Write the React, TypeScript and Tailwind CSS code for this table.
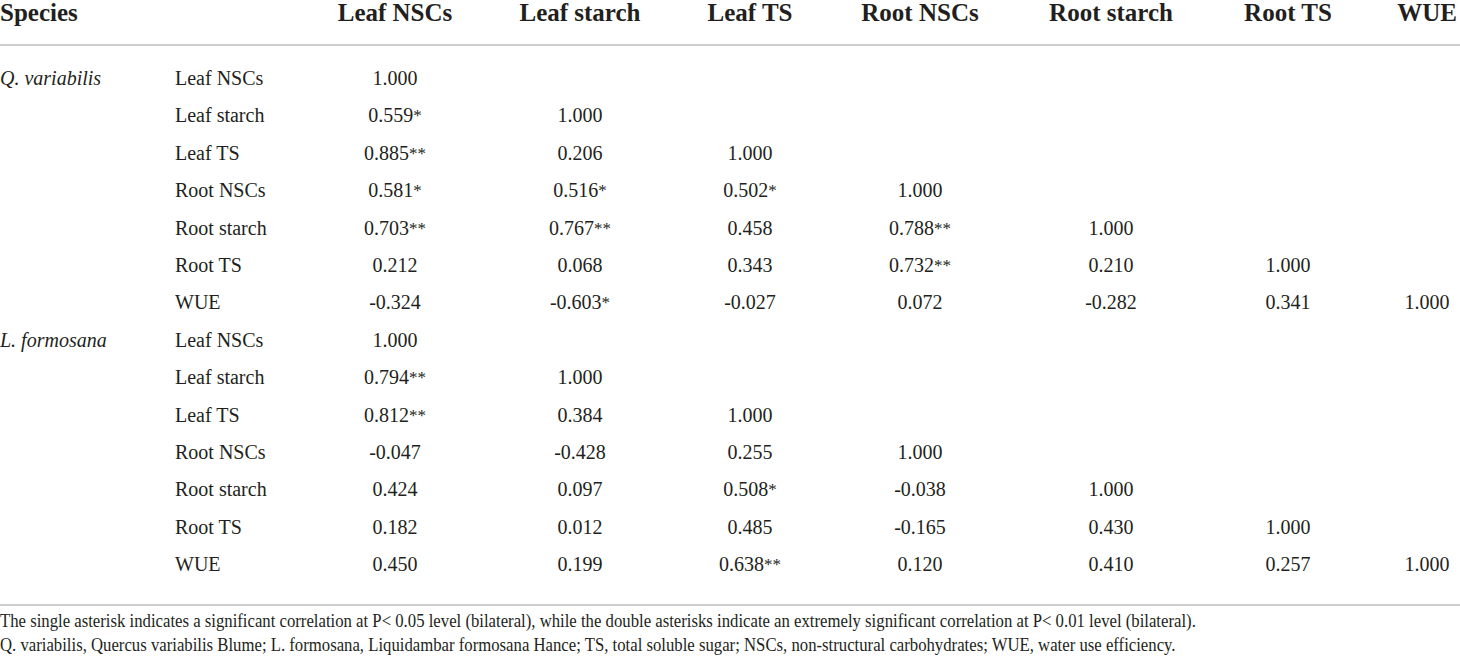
const COLS = 'grid grid-cols-[175px_155px_130px_240px_100px_240px_142px_212px_66px]';

const HEAD = ['Leaf NSCs', 'Leaf starch', 'Leaf TS', 'Root NSCs', 'Root starch', 'Root TS', 'WUE'];

type Block = { species: string; rows: [string, string[]][] };

const DATA: Block[] = [
  {
    species: 'Q. variabilis',
    rows: [
      ['Leaf NSCs', ['1.000']],
      ['Leaf starch', ['0.559*', '1.000']],
      ['Leaf TS', ['0.885**', '0.206', '1.000']],
      ['Root NSCs', ['0.581*', '0.516*', '0.502*', '1.000']],
      ['Root starch', ['0.703**', '0.767**', '0.458', '0.788**', '1.000']],
      ['Root TS', ['0.212', '0.068', '0.343', '0.732**', '0.210', '1.000']],
      ['WUE', ['-0.324', '-0.603*', '-0.027', '0.072', '-0.282', '0.341', '1.000']],
    ],
  },
  {
    species: 'L. formosana',
    rows: [
      ['Leaf NSCs', ['1.000']],
      ['Leaf starch', ['0.794**', '1.000']],
      ['Leaf TS', ['0.812**', '0.384', '1.000']],
      ['Root NSCs', ['-0.047', '-0.428', '0.255', '1.000']],
      ['Root starch', ['0.424', '0.097', '0.508*', '-0.038', '1.000']],
      ['Root TS', ['0.182', '0.012', '0.485', '-0.165', '0.430', '1.000']],
      ['WUE', ['0.450', '0.199', '0.638**', '0.120', '0.410', '0.257', '1.000']],
    ],
  },
];

function Value({ v }: { v: string }) {
  const stars = v.match(/\*+$/)?.[0] ?? '';
  const num = v.slice(0, v.length - stars.length);
  return (
    <span>
      {num}
      {stars && <span className="text-[17px] relative -top-[1px]">{stars}</span>}
    </span>
  );
}

export default function App() {
  return (
    <div className="w-[1460px] h-[665px] bg-white text-[#231f20] font-[Liberation_Serif,Times_New_Roman,serif] overflow-hidden">
      {/* header */}
      <div className={`${COLS} h-[46px] border-b-2 border-[#cfcfcf] text-[25px] font-bold leading-[26px]`}>
        <div className="col-span-2">Species</div>
        {HEAD.map((h) => (
          <div key={h} className="text-center whitespace-nowrap">
            {h}
          </div>
        ))}
      </div>

      {/* body */}
      <div className="pt-[14px] pb-[21px] border-b-2 border-[#cfcfcf] text-[20px]">
        {DATA.map((b) =>
          b.rows.map(([label, vals], i) => (
            <div key={b.species + label} className={`${COLS} h-[37.4px] leading-[37.4px]`}>
              <div className="italic">{i === 0 ? b.species : ''}</div>
              <div>{label}</div>
              {vals.map((v, j) => (
                <div key={j} className="text-center whitespace-nowrap">
                  <Value v={v} />
                </div>
              ))}
            </div>
          ))
        )}
      </div>

      {/* footnote */}
      <div className="pt-[3px] text-[19px] leading-[24px] whitespace-nowrap">
        <p className="origin-left scale-x-[0.88]">
          The single asterisk indicates a significant correlation at P&lt; 0.05 level (bilateral), while the double asterisks indicate an extremely significant correlation at P&lt; 0.01 level (bilateral).
        </p>
        <p className="origin-left scale-x-[0.88]">
          Q. variabilis, Quercus variabilis Blume; L. formosana, Liquidambar formosana Hance; TS, total soluble sugar; NSCs, non-structural carbohydrates; WUE, water use efficiency.
        </p>
      </div>
    </div>
  );
}
